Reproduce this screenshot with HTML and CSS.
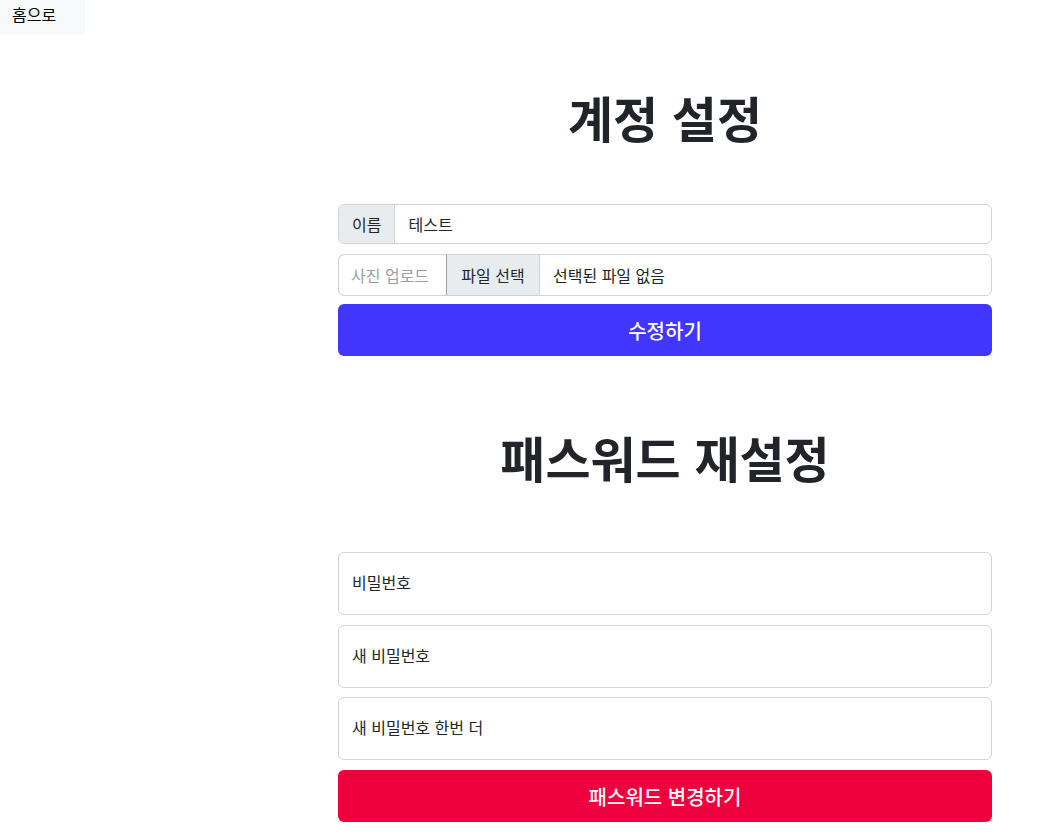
FILE: index.html
```html
<!DOCTYPE html>
<html lang="ko">
<head>
<meta charset="utf-8">
<title>계정 설정</title>
<link rel="stylesheet" href="styles.css">
</head>
<body>
<nav class="topnav"><a class="home" href="#">홈으로</a></nav>
<main class="main">
  <h1 class="title">계정 설정</h1>
  <form class="form">
    <div class="group row-name">
      <span class="addon">이름</span>
      <span class="field">테스트</span>
    </div>
    <div class="group row-file">
      <span class="photo">사진 업로드</span>
      <span class="addon file-btn">파일 선택</span>
      <span class="field">선택된 파일 없음</span>
    </div>
    <button type="button" class="btn btn-blue">수정하기</button>
  </form>
  <h1 class="title title-2">패스워드 재설정</h1>
  <form class="form">
    <div class="big-input">비밀번호</div>
    <div class="big-input">새 비밀번호</div>
    <div class="big-input">새 비밀번호 한번 더</div>
    <button type="button" class="btn btn-red">패스워드 변경하기</button>
  </form>
</main>
</body>
</html>
```

FILE: styles.css
```css
* { box-sizing: border-box; }
html, body {
  margin: 0;
  padding: 0;
  background: #fff;
  color: #212529;
  font-family: "Noto Sans CJK KR", "Noto Sans", sans-serif;
  font-size: 16px;
}
.topnav {
  display: flex;
}
.home {
  display: block;
  width: 85px;
  height: 34px;
  line-height: 28px;
  padding-left: 12px;
  background: #f8f9fa;
  color: #000;
  text-decoration: none;
  font-size: 16px;
}
.main {
  margin-left: 338px;
  width: 654px;
}
.title {
  margin: 56px 0 60px;
  font-size: 49px;
  line-height: 54px;
  font-weight: 700;
  text-align: center;
  color: #212529;
}
.title-2 {
  margin: 74px 0 68px;
}
.form {
  display: flex;
  flex-direction: column;
}
.group {
  display: flex;
  border: 1px solid #ced4da;
  border-radius: 6px;
  overflow: hidden;
}
.row-name {
  height: 40px;
  margin-bottom: 10px;
}
.row-file {
  height: 42px;
  margin-bottom: 8px;
}
.addon {
  display: flex;
  align-items: center;
  padding: 0 13px;
  background: #e9ecef;
  border-right: 1px solid #ced4da;
  white-space: nowrap;
}
.field {
  display: flex;
  align-items: center;
  flex: 1;
  padding: 0 13px;
  white-space: nowrap;
}
.photo {
  display: flex;
  align-items: center;
  width: 109px;
  padding: 0 12px;
  margin: -1px 0 -1px -1px;
  border: 1px solid #9ea2a6;
  border-radius: 6px 0 0 6px;
  color: #999da1;
  white-space: nowrap;
}
.file-btn {
  width: 93px;
  justify-content: center;
  padding: 0;
}
.btn {
  height: 52px;
  border: none;
  border-radius: 6px;
  color: #fff;
  font-family: inherit;
  font-size: 20px;
  font-weight: 500;
  cursor: pointer;
}
.btn-blue { background: #4136fe; }
.btn-red { background: #ee003f; }
.big-input {
  display: flex;
  align-items: center;
  height: 63px;
  margin-bottom: 10px;
  padding: 0 13px 3px;
  border: 1px solid #ced4da;
  border-radius: 6px;
}
.big-input:nth-child(2) { margin-bottom: 9px; }
.big-input:nth-child(3) { margin-bottom: 10px; }
```
